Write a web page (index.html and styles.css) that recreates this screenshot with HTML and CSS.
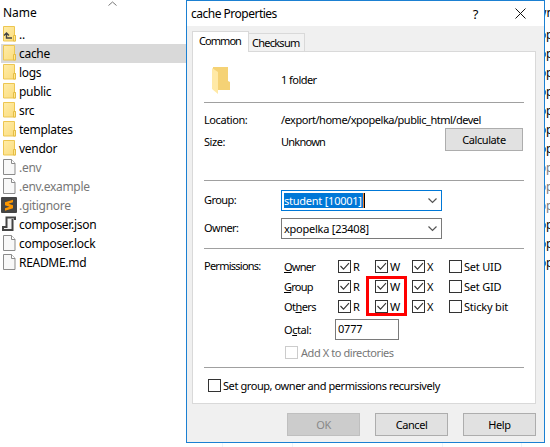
FILE: index.html
```html
<!DOCTYPE html>
<html lang="en">
<head>
<meta charset="utf-8">
<title>cache Properties</title>
<link rel="stylesheet" href="styles.css">
</head>
<body>
<svg class="defs" width="0" height="0">
  <defs>
    <linearGradient id="gold" x1="0" y1="0" x2="1" y2="1"><stop offset="0" stop-color="#ffeca8"/><stop offset="1" stop-color="#fbdc7c"/></linearGradient>
    <symbol id="folder" viewBox="0 0 16 19"><path d="M2.500 1.500h11v9h1v5.500h-12z" fill="url(#gold)" stroke="#edc650"/><path d="M12.500 16v-5.500h2V16z" fill="#ffe793" stroke="#e5bd46"/></symbol>
    <symbol id="file" viewBox="0 0 16 19"><path d="M2.500 1.500h8l3.500 4v11H2.500z" fill="#f8f8f8" stroke="#8b8b8b"/><path d="M10.500 1.500v4H14" fill="#fff" stroke="#8b8b8b"/></symbol>
    <symbol id="tick" viewBox="0 0 13 13"><path d="M2.500 6l3 3.200 5.500-6" fill="none" stroke="#333" stroke-width="1.100"/></symbol>
  </defs>
</svg>
<main class="screen">
  <section class="files">
    <div class="head"><span>Name</span><svg class="sort" width="9" height="6"><path d="M.5 5.500L4.500 2l4 3.500" fill="none" stroke="#777"/></svg></div>
    <div class="row"><svg class="ico"><use href="#folder"/><path d="M5.500 8.500v4.500H11M3 10.500L5.500 8 8 10.500" fill="none" stroke="#444" stroke-width="1.400"/></svg><span>..</span></div>
    <div class="row selected"><svg class="ico"><use href="#folder"/></svg><span>cache</span></div>
    <div class="row"><svg class="ico"><use href="#folder"/></svg><span>logs</span></div>
    <div class="row"><svg class="ico"><use href="#folder"/></svg><span>public</span></div>
    <div class="row"><svg class="ico"><use href="#folder"/></svg><span>src</span></div>
    <div class="row"><svg class="ico"><use href="#folder"/></svg><span>templates</span></div>
    <div class="row"><svg class="ico"><use href="#folder"/></svg><span>vendor</span></div>
    <div class="row dim"><svg class="ico"><use href="#file"/></svg><span>.env</span></div>
    <div class="row dim"><svg class="ico"><use href="#file"/></svg><span>.env.example</span></div>
    <div class="row dim"><svg class="ico"><rect y="1" width="16" height="16" rx="1" fill="#454545"/><path d="M12 3.800L4 6.300v3l4.500 1.400L4 12.200v2.500l8-2.500v-3L7.500 7.800 12 6.300z" fill="#ff9800"/></svg><span>.gitignore</span></div>
    <div class="row"><svg class="ico"><path d="M5 2h9v3h-1.500v10H2v-3h3z" fill="#f4f4f4"/><path d="M14 5V2.500H5.500V12H2v3h9.500V4" fill="none" stroke="#444" stroke-width="2"/></svg><span>composer.json</span></div>
    <div class="row"><svg class="ico"><use href="#file"/></svg><span>composer.lock</span></div>
    <div class="row"><svg class="ico"><use href="#file"/></svg><span>README.md</span></div>
  </section>
  <section class="owners">
    <div class="head">wn</div>
    <div class="row"><span>op</span></div><div class="row"><span>op</span></div><div class="row"><span>op</span></div><div class="row"><span>op</span></div><div class="row"><span>op</span></div><div class="row"><span>op</span></div><div class="row"><span>op</span></div>
    <div class="row dim"><span>op</span></div><div class="row dim"><span>op</span></div><div class="row dim"><span>op</span></div>
    <div class="row"><span>op</span></div><div class="row"><span>op</span></div><div class="row"><span>op</span></div>
  </section>
  <section class="dialog">
    <header class="title"><span>cache Properties</span><b class="help">?</b><svg width="11" height="11"><path d="M.5.5l10 10M10.500.5l-10 10" stroke="#111" fill="none"/></svg></header>
    <nav class="tabs"><div class="tab active"><span>Common</span></div><div class="tab"><span>Checksum</span></div></nav>
    <div class="panel">
      <div class="summary"><svg width="20" height="28"><path d="M1 0h15v14l2 1v8H1z" fill="#f5d275"/><path d="M0 1l6 4v22l-6-5z" fill="#ffe9a6"/></svg><span class="tight">1 folder</span></div>
      <div class="details">
        <div class="line"><label>Location:</label><span class="path">/export/home/xpopelka/public_html/devel</span></div>
        <div class="line"><label>Size:</label><span class="tighter">Unknown</span></div>
        <button class="btn calc">Calculate</button>
      </div>
      <div class="identity">
        <div class="pick"><label class="tight">Group:</label><div class="combo focus"><span class="sel">student [10001]</span><svg width="9" height="6"><path d="M.5.5l4 4 4-4" fill="none" stroke="#555" stroke-width="1.200"/></svg></div></div>
        <div class="pick"><label class="tight">Owner:</label><div class="combo"><span>xpopelka [23408]</span><svg width="9" height="6"><path d="M.5.5l4 4 4-4" fill="none" stroke="#555" stroke-width="1.200"/></svg></div></div>
      </div>
      <div class="perms">
        <label class="tighter">Permissions:</label>
        <div class="grid">
          <span class="tighter"><u>O</u>wner</span><div class="ck"><i><svg><use href="#tick"/></svg></i>R</div><div class="ck"><i><svg><use href="#tick"/></svg></i>W</div><div class="ck"><i><svg><use href="#tick"/></svg></i>X</div><div class="ck"><i></i><span>Set UID</span></div>
          <span class="tighter"><u>G</u>roup</span><div class="ck"><i><svg><use href="#tick"/></svg></i>R</div><div class="ck marked"><i><svg><use href="#tick"/></svg></i>W</div><div class="ck"><i><svg><use href="#tick"/></svg></i>X</div><div class="ck"><i></i><span>Set GID</span></div>
          <span class="tight">Ot<u>h</u>ers</span><div class="ck"><i><svg><use href="#tick"/></svg></i>R</div><div class="ck"><i><svg><use href="#tick"/></svg></i>W</div><div class="ck"><i><svg><use href="#tick"/></svg></i>X</div><div class="ck"><i></i><span>Sticky bit</span></div>
        </div>
        <div class="octal"><span>O<u>c</u>tal:</span><div class="field">0777</div></div>
        <div class="ck addx"><i></i><span>Add X to directories</span></div>
      </div>
      <div class="ck recursive"><i></i><span>Set group, owner and permissions recursively</span></div>
    </div>
    <footer class="actions"><button class="btn off">OK</button><button class="btn">Cancel</button><button class="btn">Help</button></footer>
  </section>
  <div class="strip"><i></i><i></i><i></i><i></i></div>
</main>
</body>
</html>
```
FILE: styles.css
```css
*, *::after { box-sizing: border-box; }
body { margin: 0; background: #fff; color: #000; font: 11px/14px "Noto Sans", "Open Sans", sans-serif; }
svg { display: block; flex: none; }
.defs { position: absolute; }
.screen { position: relative; width: 550px; height: 447px; overflow: hidden; display: flex; flex-direction: column; }
.files, .owners { font-size: 12px; line-height: 19px; letter-spacing: -.3px; }
.files { width: 186px; }
.head { height: 25px; padding: 4px 0 0 3px; line-height: 18px; display: flex; letter-spacing: 0; }
.sort { margin: -4px 0 0 71px; }
.row { height: 19px; margin-left: 1px; display: flex; white-space: nowrap; }
.row .ico { width: 16px; height: 19px; margin-right: 2px; }
.selected { background: #d9d9d9; }
.dim { color: #777; }
.owners { position: absolute; left: 545px; top: 0; width: 5px; overflow: hidden; }
.owners .head { padding-left: 0; text-indent: -8px; }
.owners .row { margin-left: -6px; }
.dialog { position: absolute; left: 186px; top: 0; width: 359px; height: 443px; border: 1px solid #1b80d2; background: #f0f0f0; letter-spacing: -.42px; }
.title { height: 25px; background: #fff; display: flex; align-items: center; padding: 0 18px 0 4px; font-size: 12px; letter-spacing: -.5px; }
.help { margin-left: auto; margin-right: 37px; font-size: 13px; font-weight: 400; }
.tight { letter-spacing: -.55px; }
.tighter { letter-spacing: -.75px; }
.path { letter-spacing: -.48px; }
.tabs { display: flex; align-items: flex-end; height: 25px; padding-left: 5px; letter-spacing: -.75px; }
.tab { height: 18px; width: 56px; border: 1px solid #d9d9d9; border-width: 1px 1px 0 0; padding: 2px 0 0 3px; background: #f2f2f2; }
.tab.active { width: 57px; height: 21px; margin-bottom: -1px; border-left-width: 1px; padding: 2px 0 0 6px; background: #fff; z-index: 1; letter-spacing: -.95px; }
.panel { width: 344px; height: 353px; margin-left: 5px; border: 1px solid #d9d9d9; background: #fff; padding: 0 11px; }
.summary { height: 51px; border-bottom: 1px solid #a0a0a0; display: flex; padding: 15px 0 0 8px; }
.summary span { margin: 6px 0 0 49px; }
.details { position: relative; height: 78px; border-bottom: 1px solid #a0a0a0; padding-top: 10px; }
.line { display: flex; height: 22px; }
.line label, .pick label { width: 77px; flex: none; }
.btn { width: 73px; height: 23px; border: 1px solid #adadad; background: #e1e1e1; font: inherit; letter-spacing: -.42px; color: #000; padding: 0; }
.calc { position: absolute; right: 1px; top: 25px; width: 78px; }
.identity { height: 68px; border-bottom: 1px solid #a0a0a0; padding-top: 9px; }
.pick { display: flex; height: 28px; line-height: 20px; }
.combo { width: 161px; height: 21px; border: 1px solid #7a7a7a; display: flex; align-items: center; justify-content: space-between; padding: 0 4px 0 2px; line-height: 15px; letter-spacing: -.24px; }
.combo.focus { border-color: #0078d7; }
.sel { background: #0078d7; color: #fff; border-right: 1px solid #000; box-shadow: inset -1px 0 #f08030; padding-right: 2px; }
.perms { height: 119px; border-bottom: 1px solid #a0a0a0; padding-top: 10px; display: grid; grid-template-columns: 80px 1fr; grid-template-rows: 60px 24px 20px; }
.grid { display: grid; grid-template-columns: 54px 37px 37px 37px 1fr; grid-auto-rows: 20px; line-height: 16px; letter-spacing: -.2px; }
.ck { position: relative; display: flex; line-height: 16px; white-space: nowrap; }
.ck > i { width: 13px; height: 13px; flex: none; border: 1px solid #333; margin: 1px 2px 0 0; background: #fff; }
.ck > i svg { width: 13px; height: 13px; margin: -1px; }
.marked::after { content: ""; position: absolute; left: -9px; top: -3px; width: 41px; height: 40px; border: 3px solid red; }
.octal { grid-column: 2; display: flex; line-height: 22px; }
.octal span { width: 51px; }
.field { width: 64px; height: 21px; border: 1px solid #7a7a7a; padding-left: 2px; line-height: 18px; letter-spacing: -.2px; }
.addx { grid-column: 2; padding: 2px 0 0 1px; color: #777; }
.addx > i { border-color: #ccc; margin-right: 3px; }
.recursive { padding: 10px 0 0 4px; }
.actions { display: flex; gap: 15px; padding: 9px 0 0 100px; }
.btn.off { color: #888; border-color: #bfbfbf; background: #ccc; }
.strip { display: grid; grid-template-columns: 70px 150px 79px 1px; margin: auto 0 0 222px; height: 4px; }
.strip i { border-left: 1px solid #edf3fb; }
```
